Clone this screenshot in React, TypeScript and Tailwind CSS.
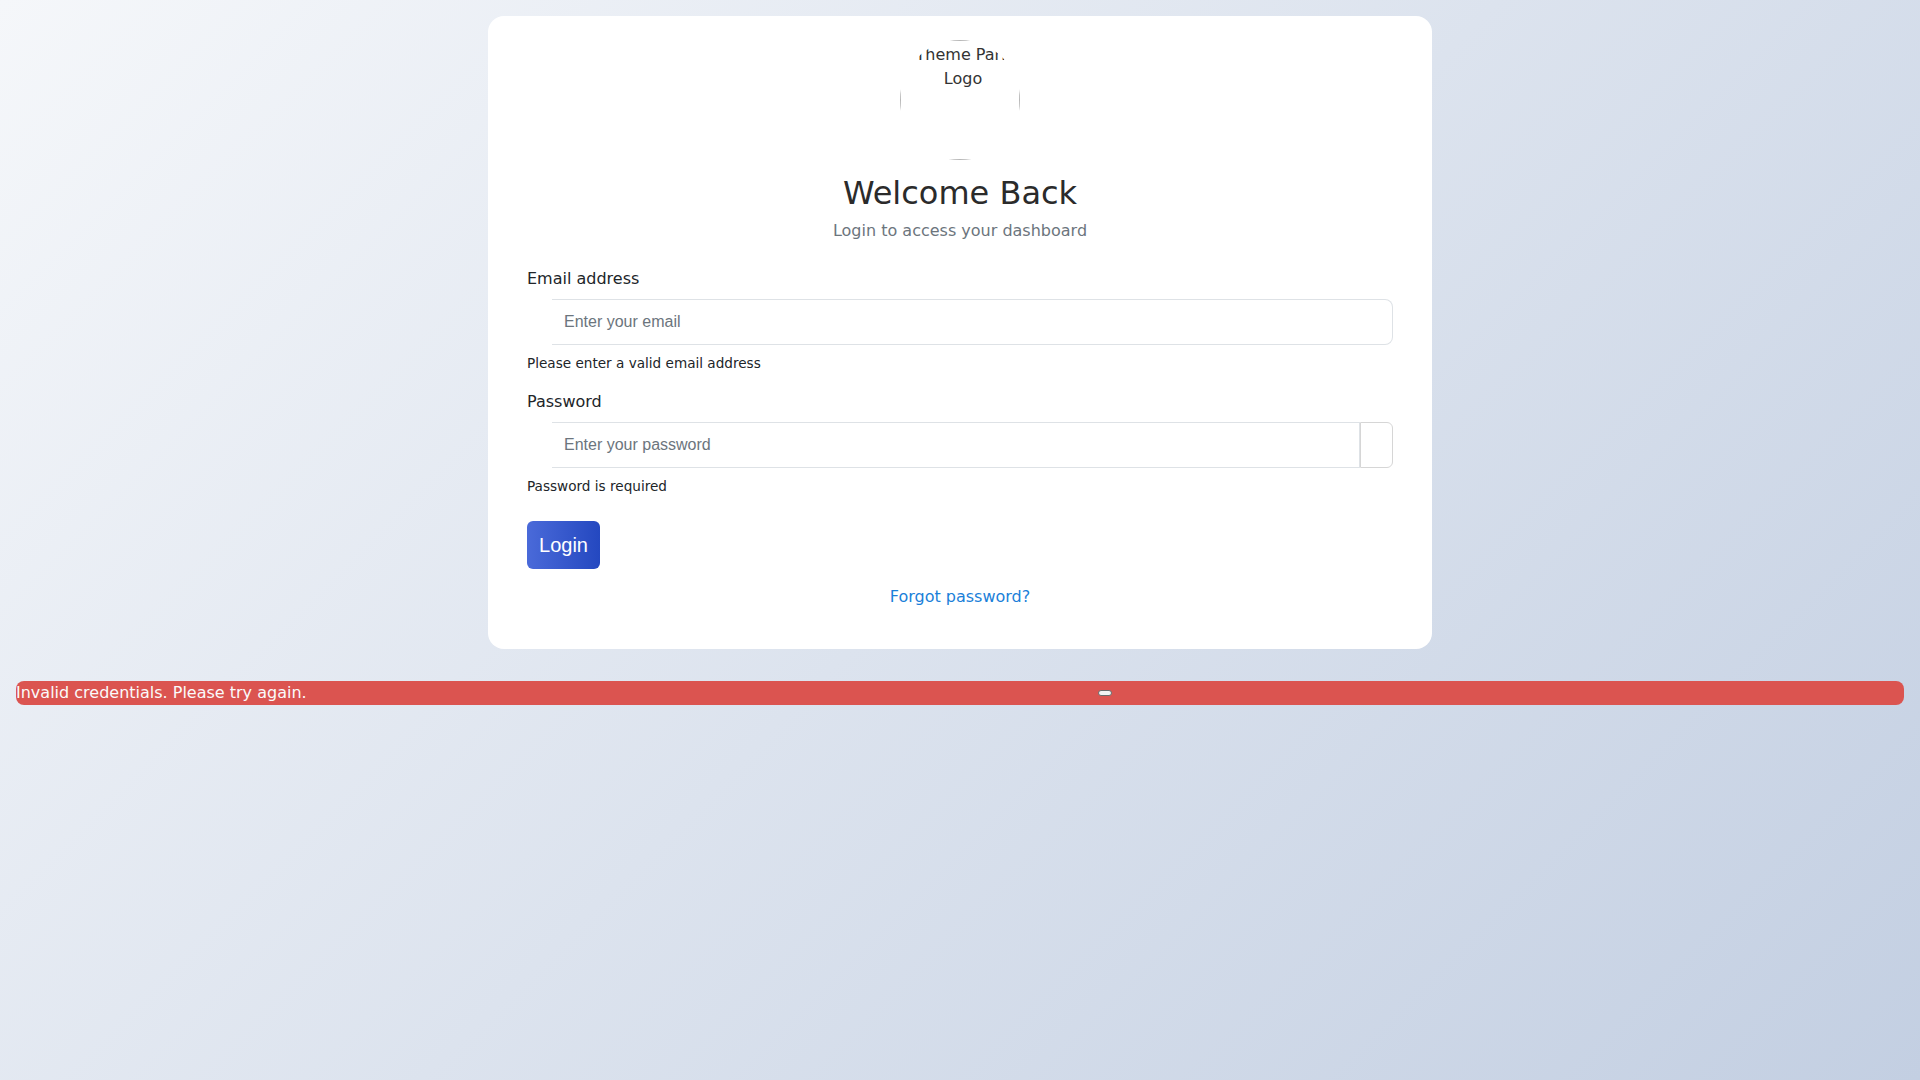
import { useState } from "react";

/**
 * Pantalla de login con el logo roto, el formulario con errores y el aviso de credenciales.
 */
export default function App() {
  const [email, setEmail] = useState("");
  const [password, setPassword] = useState("");
  const [showToast, setShowToast] = useState(true);

  return (
    <div className="min-h-screen bg-[linear-gradient(135deg,#f5f7fa_0%,#c3cfe2_100%)] p-4 font-['DejaVu_Sans',sans-serif] text-base leading-6 text-[#212529]">
      {/* Tarjeta principal */}
      <div className="mx-auto w-[944px] rounded-2xl bg-white px-[39px] pt-6 pb-10">
        {/* Logo (imagen que no carga, solo se ve el texto alternativo) */}
        <div className="mx-auto mb-[14px] h-[120px] w-[120px] overflow-hidden rounded-full">
          <div className="h-full w-full border border-[#b8b8b8] pt-[2px] pl-[6px] text-center leading-6 text-[#333]">
            Theme Park Logo
          </div>
        </div>

        <h2 className="mb-[7px] text-center text-[32px] leading-[1.2] font-normal text-[#2b2b2b]">Welcome Back</h2>
        <p className="mb-6 text-center text-[#6c757d]">Login to access your dashboard</p>

        <form onSubmit={(e) => e.preventDefault()}>
          {/* Email */}
          <div className="mb-4">
            <label htmlFor="email" className="mb-2 block">Email address</label>
            <div className="flex h-[46px]">
              <span className="w-[25px] shrink-0" />
              <input
                id="email"
                type="email"
                value={email}
                onChange={(e) => setEmail(e.target.value)}
                placeholder="Enter your email"
                className="min-w-0 flex-1 rounded-r-lg border border-l-0 border-[#dee2e6] px-3 font-['Liberation_Sans',Arial,sans-serif] text-base text-[#212529] outline-none placeholder:text-[#6c757d]"
              />
            </div>
            <div className="mt-2 text-[13.6px] leading-[21px]">Please enter a valid email address</div>
          </div>

          {/* Password */}
          <div>
            <label htmlFor="password" className="mb-2 block">Password</label>
            <div className="flex h-[46px]">
              <span className="w-[25px] shrink-0" />
              <input
                id="password"
                type="password"
                value={password}
                onChange={(e) => setPassword(e.target.value)}
                placeholder="Enter your password"
                className="min-w-0 flex-1 border border-l-0 border-[#dee2e6] px-3 font-['Liberation_Sans',Arial,sans-serif] text-base text-[#212529] outline-none placeholder:text-[#6c757d]"
              />
              <button type="button" className="w-[33px] shrink-0 rounded-r-md border border-[#d6d6d6] bg-white" />
            </div>
            <div className="mt-2 text-[13.6px] leading-[21px]">Password is required</div>
          </div>

          <button
            type="submit"
            className="mt-6 h-12 w-[73px] rounded-md bg-[linear-gradient(90deg,#4a6ad9_0%,#2448c0_100%)] font-['Liberation_Sans',Arial,sans-serif] text-xl text-white"
          >
            Login
          </button>

          <div className="mt-4 text-center">
            <a href="#" className="text-[#1a7fd9]">Forgot password?</a>
          </div>
        </form>
      </div>

      {/* Aviso de error */}
      {showToast && (
        <div className="mt-8 flex h-6 items-center rounded-lg bg-[#db5450] text-[#fafafa]">
          <span>Invalid credentials. Please try again.</span>
          <div className="flex flex-1 items-center justify-center">
            <button
              type="button"
              onClick={() => setShowToast(false)}
              className="h-[6px] w-[14px] rounded-sm border border-[#6b6b6b] bg-[#f2f2f2]"
            />
          </div>
        </div>
      )}
    </div>
  );
}
